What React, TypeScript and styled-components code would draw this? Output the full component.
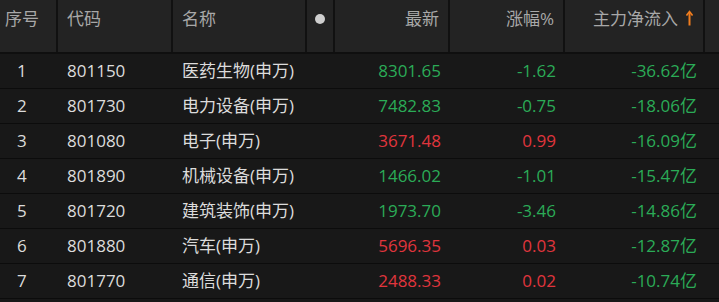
import React from "react"
import styled, { createGlobalStyle } from "styled-components"

const GlobalStyle = createGlobalStyle`
  html, body {
    margin: 0;
    padding: 0;
    background: #161616;
  }
  body {
    font-family: "Open Sans", "Noto Sans CJK SC", "Noto Sans", sans-serif;
  }
`

type Row = {
  code: string
  name: string
  price: string
  pct: string
  flow: string
}

const rows: Row[] = [
  { code: "801150", name: "医药生物(申万)", price: "8301.65", pct: "-1.62", flow: "-36.62亿" },
  { code: "801730", name: "电力设备(申万)", price: "7482.83", pct: "-0.75", flow: "-18.06亿" },
  { code: "801080", name: "电子(申万)", price: "3671.48", pct: "0.99", flow: "-16.09亿" },
  { code: "801890", name: "机械设备(申万)", price: "1466.02", pct: "-1.01", flow: "-15.47亿" },
  { code: "801720", name: "建筑装饰(申万)", price: "1973.70", pct: "-3.46", flow: "-14.86亿" },
  { code: "801880", name: "汽车(申万)", price: "5696.35", pct: "0.03", flow: "-12.87亿" },
  { code: "801770", name: "通信(申万)", price: "2488.33", pct: "0.02", flow: "-10.74亿" },
]

const COLS = "58px 115px 134px 28px 115px 115px 140px 1fr"

const Table = styled.div`
  width: 719px;
  height: 302px;
  overflow: hidden;
  background: #161616;
  font-size: 17px;
`

const HeaderRow = styled.div`
  display: grid;
  grid-template-columns: ${COLS};
  height: 52px;
  background: #232323;
  border-bottom: 2px solid #0f0f0f;
`

const HeaderCell = styled.div<{ $align?: "left" | "right" | "center" }>`
  display: flex;
  align-items: flex-start;
  justify-content: ${(p) =>
    p.$align === "right" ? "flex-end" : p.$align === "center" ? "center" : "flex-start"};
  padding: 7px 9px 0 9px;
  color: #a8a8a8;
  line-height: 24px;
  border-right: 2px solid #111;
  box-sizing: border-box;
  white-space: nowrap;

  &:first-child {
    padding-left: 5px;
  }
  &:last-child {
    border-right: none;
  }
`

const DotCell = styled(HeaderCell)`
  padding: 7px 0 0 0;
`

const Dot = styled.span`
  display: block;
  width: 10px;
  height: 10px;
  margin-top: 7px;
  border-radius: 50%;
  background: #cfcfcf;
`

const SortArrow = styled.svg`
  margin: 3px 0 0 8px;
  flex: none;
`

const BodyRow = styled.div`
  display: grid;
  grid-template-columns: ${COLS};
  height: 34px;
  align-items: center;
  border-bottom: 1px solid #0c0c0c;
  background: #181818;
`

const Cell = styled.div<{ $align?: "left" | "right"; $tone?: "up" | "down" | "plain"; $pr?: number }>`
  padding: 0 ${(p) => p.$pr ?? 9}px 0 9px;
  text-align: ${(p) => (p.$align === "right" ? "right" : "left")};
  color: ${(p) => (p.$tone === "up" ? "#e0353d" : p.$tone === "down" ? "#2bab57" : "#dcdcdc")};
  white-space: nowrap;
  line-height: 24px;
`

const IndexCell = styled(Cell)`
  padding-left: 17px;
`

const toneOf = (v: string) => (v.startsWith("-") ? "down" : "up")

export default function App() {
  return (
    <>
      <GlobalStyle />
      <Table>
        <HeaderRow>
          <HeaderCell>序号</HeaderCell>
          <HeaderCell>代码</HeaderCell>
          <HeaderCell>名称</HeaderCell>
          <DotCell $align="center">
            <Dot />
          </DotCell>
          <HeaderCell $align="right">最新</HeaderCell>
          <HeaderCell $align="right">涨幅%</HeaderCell>
          <HeaderCell $align="right" style={{ paddingRight: 10 }}>
            主力净流入
            <SortArrow width="7" height="16" viewBox="0 0 7 16">
              <path d="M3.5 2 V15.5" stroke="#f07d1e" strokeWidth="2" fill="none" />
              <path d="M0.5 5.5 L3.5 1.5 L6.5 5.5" stroke="#f07d1e" strokeWidth="1.6" fill="none" />
            </SortArrow>
          </HeaderCell>
          <HeaderCell />
        </HeaderRow>
        {rows.map((r, i) => (
          <BodyRow key={r.code}>
            <IndexCell>{i + 1}</IndexCell>
            <Cell>{r.code}</Cell>
            <Cell>{r.name}</Cell>
            <Cell />
            <Cell $align="right" $tone={toneOf(r.pct)}>{r.price}</Cell>
            <Cell $align="right" $tone={toneOf(r.pct)}>{r.pct}</Cell>
            <Cell $align="right" $tone={toneOf(r.flow)} $pr={8}>
              {r.flow}
            </Cell>
            <Cell />
          </BodyRow>
        ))}
        <BodyRow />
      </Table>
    </>
  )
}
